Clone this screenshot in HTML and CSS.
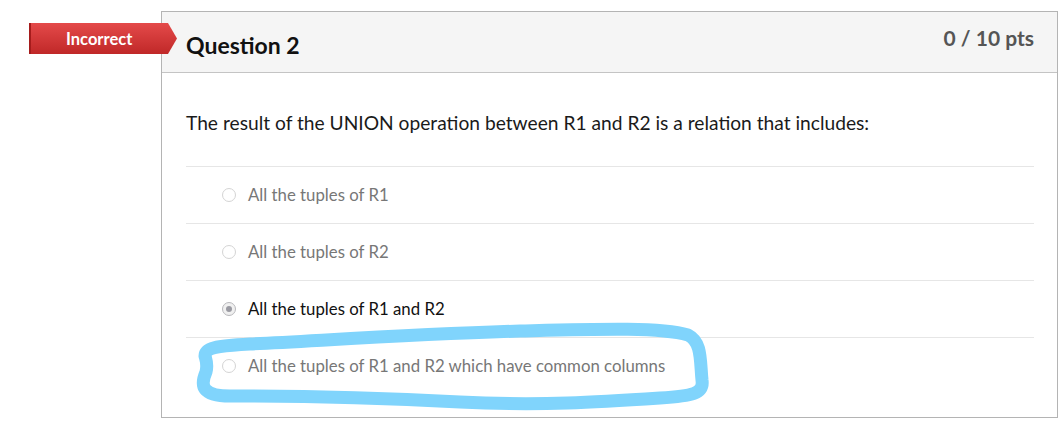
FILE: index.html
```html
<!DOCTYPE html>
<html>
<head>
<meta charset="utf-8">
<link rel="stylesheet" href="styles.css">
</head>
<body>
<div class="page">
  <div class="badge"><span>Incorrect</span></div>
  <div class="card">
    <div class="card-header">
      <h2 class="q-title">Question 2</h2>
      <div class="q-points">0 / 10 pts</div>
    </div>
    <div class="card-body">
      <p class="q-text">The result of the UNION operation between R1 and R2 is a relation that includes:</p>
      <div class="answer"><span class="radio"></span><span class="label">All the tuples of R1</span></div>
      <div class="answer"><span class="radio"></span><span class="label">All the tuples of R2</span></div>
      <div class="answer selected"><span class="radio"></span><span class="label">All the tuples of R1 and R2</span></div>
      <div class="answer"><span class="radio"></span><span class="label">All the tuples of R1 and R2 which have common columns</span></div>
    </div>
  </div>
  <svg class="marker" width="1062" height="426" viewBox="0 0 1062 426">
    <path d="M 205 356 C 205 348, 215 346, 250 344 C 330 340, 420 334, 520 331 C 600 329, 660 327, 688 335 C 702 342, 700 360, 702 380 C 704 394, 692 396, 660 398 C 600 402, 540 406, 460 402 C 380 398, 300 396, 230 396 C 202 396, 200 386, 206 372 C 208 364, 206 360, 205 356 Z" />
  </svg>
</div>
</body>
</html>
```
FILE: styles.css
```css
* { box-sizing: border-box; }
html, body { margin: 0; padding: 0; background: #fff; }
body { font-family: Lato, "Open Sans", "Liberation Sans", sans-serif; }

.page {
  position: relative;
  width: 1062px;
  height: 426px;
  padding: 11px 0 0 161px;
}

.card {
  width: 897px;
  border: 1px solid #b4b4b4;
  background: #fff;
}

.card-header {
  height: 61px;
  background: #f5f5f5;
  border-bottom: 1px solid #c4c4c4;
  display: flex;
  justify-content: space-between;
  align-items: flex-start;
  padding: 0 23px 0 24px;
}

.q-title {
  margin: 19px 0 0;
  font-size: 23px;
  line-height: 28px;
  font-weight: 700;
  color: #111;
}

.q-points {
  margin-top: 13px;
  font-size: 21px;
  line-height: 26px;
  font-weight: 700;
  color: #555;
}

.card-body {
  padding: 36px 23px 23px 24px;
}

.q-text {
  margin: 0 0 29px;
  font-size: 19.2px;
  line-height: 28px;
  color: #1a1a1a;
}

.answer {
  display: flex;
  align-items: center;
  border-top: 1px solid #e6e6e6;
  padding: 18px 0 18px 36px;
  height: 57px;
}

.radio {
  width: 14px;
  height: 14px;
  border-radius: 50%;
  border: 1px solid #d4d4d4;
  background: #fff;
  margin-right: 12px;
  flex: none;
  position: relative;
}

.selected .radio {
  border-color: #b8b8bc;
  background: #f0f0f0;
}

.selected .radio::after {
  content: "";
  position: absolute;
  left: 3px;
  top: 3px;
  width: 6px;
  height: 6px;
  border-radius: 50%;
  background: #9a9aa2;
}

.label {
  font-size: 16.8px;
  line-height: 20px;
  color: #777;
}

.selected .label { color: #111; }

.badge {
  position: absolute;
  left: 29px;
  top: 23px;
  width: 148px;
  height: 31px;
  background: linear-gradient(#e44a4a, #c02828);
  clip-path: polygon(0 0, 139px 0, 148px 50%, 139px 100%, 0 100%);
  border-left: 2px solid #a51c1c;
  display: flex;
  align-items: center;
  padding-left: 35px;
}

.badge span {
  color: #fff;
  font-size: 16.5px;
  font-weight: 700;
}

.marker {
  position: absolute;
  left: 0;
  top: 0;
  pointer-events: none;
}

.marker path {
  fill: none;
  stroke: #80d4fc;
  stroke-width: 13;
  stroke-linejoin: round;
  stroke-linecap: round;
}
```
